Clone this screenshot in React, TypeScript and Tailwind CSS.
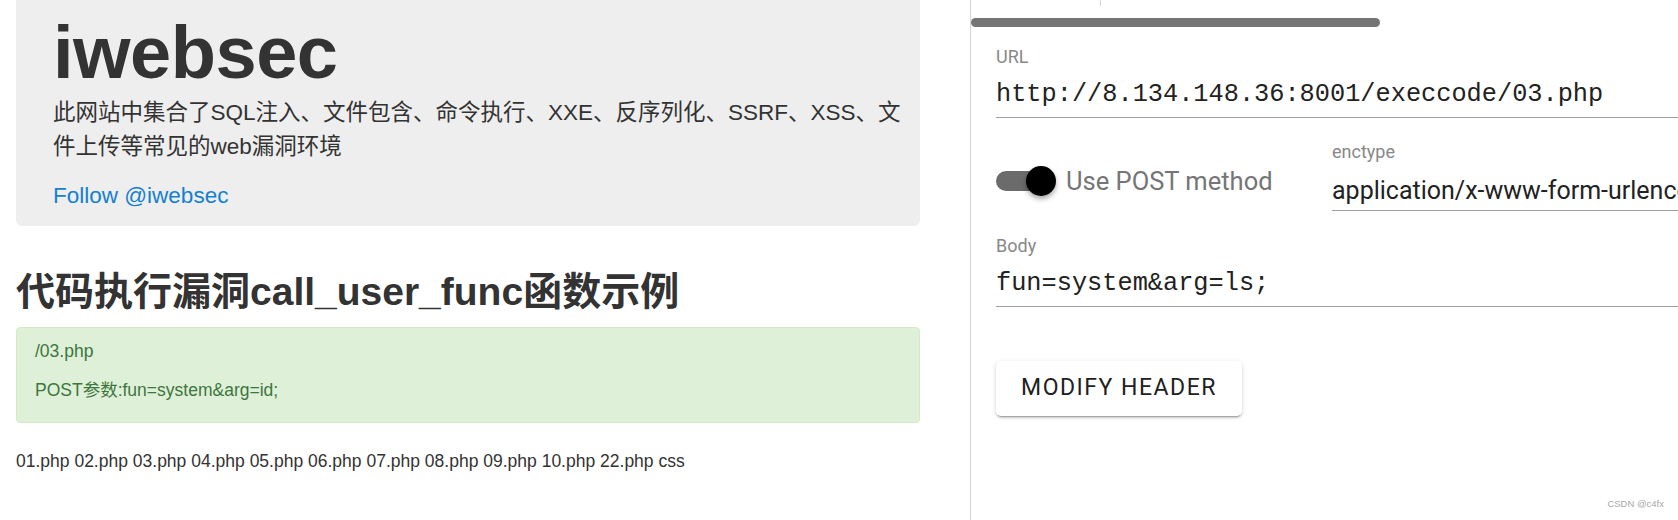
import React from 'react';

const pages = ['01.php', '02.php', '03.php', '04.php', '05.php', '06.php', '07.php', '08.php', '09.php', '10.php', '22.php', 'css'];

/* Left: the iwebsec demo page */
function DemoPage() {
  return (
    <div className="w-[970px] shrink-0 pl-4 pr-[50px] font-['Liberation_Sans','Noto_Sans_CJK_SC',sans-serif] text-[#333]">
      {/* jumbotron */}
      <div className="h-[226px] rounded-b-[6px] bg-[#eeeeee] pt-4 pl-[37px] pr-[14px]">
        <h1 className="text-[74px] font-bold leading-none tracking-[-0.5px]">iwebsec</h1>
        <p className="mt-[6px] text-[22.5px] leading-[34px]">
          此网站中集合了SQL注入、文件包含、命令执行、XXE、反序列化、SSRF、XSS、文件上传等常见的web漏洞环境
        </p>
        <p className="mt-[15px] text-[22.5px] leading-[34px]">
          <a className="text-[#1580d0]">Follow @iwebsec</a>
        </p>
      </div>

      <h2 className="mt-[44px] text-[39px] font-bold leading-[43px]">代码执行漏洞call_user_func函数示例</h2>

      <div className="mt-[14px] rounded-[4px] border border-[#d6e9c6] bg-[#dff0d8] px-[18px] pt-[11px] pb-[19px] text-[17.5px] leading-[25px] text-[#3c763d]">
        <p>/03.php</p>
        <p className="mt-[14px]">POST参数:fun=system&amp;arg=id;</p>
      </div>

      <div className="mt-[26px] text-[17.5px] leading-[25px]">
        {pages.map((p, i) => (
          <React.Fragment key={p}>
            <a>{p}</a>
            {i < pages.length - 1 ? ' ' : ''}
          </React.Fragment>
        ))}
      </div>
    </div>
  );
}

/* Right: HackBar-style request panel */
function RequestPanel() {
  return (
    <div className="relative min-w-0 flex-1 overflow-hidden border-l border-[#d3d3d3] font-['Roboto',sans-serif]">
      <div className="ml-[129px] h-[6px] w-px bg-[#d3d3d3]" />
      <div className="mt-[12px] h-[9px] w-[409px] rounded-full bg-[#757575]" />

      <div className="pl-[25px]">
        {/* URL */}
        <div className="mt-[20px] w-[900px]">
          <div className="text-[18px] leading-[20px] text-[#888]">URL</div>
          <div className="mt-[12px] border-b border-[#9e9e9e] pb-[6px] font-['Liberation_Mono',monospace] text-[25.3px] leading-[32px] whitespace-nowrap text-[#222]">
            http://8.134.148.36:8001/execcode/03.php
          </div>
        </div>

        {/* POST switch + enctype */}
        <div className="mt-[24px] flex items-start">
          <div className="mt-[24px] flex h-[30px] w-[336px] shrink-0 items-center">
            <div className="relative h-[30px] w-[60px] shrink-0">
              <div className="absolute left-0 top-[5px] h-[20px] w-[52px] rounded-full bg-[#6b6b6b]" />
              <div className="absolute left-[30px] top-0 h-[30px] w-[30px] rounded-full bg-black shadow-[0_3px_5px_rgba(0,0,0,0.35)]" />
            </div>
            <span className="ml-[10px] text-[25.5px] leading-[30px] text-[#757575]">Use POST method</span>
          </div>
          <div className="w-[500px] shrink-0">
            <div className="text-[18px] leading-[20px] text-[#888]">enctype</div>
            <div className="mt-[14px] border-b border-[#9e9e9e] pb-[4px] text-[25px] leading-[30px] whitespace-nowrap text-[#222]">
              application/x-www-form-urlencoded
            </div>
          </div>
        </div>

        {/* Body */}
        <div className="mt-[25px] w-[900px]">
          <div className="text-[18px] leading-[20px] text-[#888]">Body</div>
          <div className="mt-[12px] border-b border-[#9e9e9e] pb-[6px] font-['Liberation_Mono',monospace] text-[25.3px] leading-[32px] whitespace-nowrap text-[#222]">
            fun=system&amp;arg=ls;
          </div>
        </div>

        <button className="mt-[54px] flex h-[55px] w-[246px] items-center justify-center rounded-[5px] bg-white text-[23px] font-normal tracking-[1.5px] text-[#212121] shadow-[0_3px_1px_-2px_rgba(0,0,0,0.2),0_2px_2px_0_rgba(0,0,0,0.14),0_1px_5px_0_rgba(0,0,0,0.12)]">
          MODIFY HEADER
        </button>
      </div>

      <span className="absolute bottom-[9px] right-[14px] font-['Liberation_Sans',sans-serif] text-[9.5px] text-[#a8a8a8]">
        CSDN @c4fx
      </span>
    </div>
  );
}

export default function App() {
  return (
    <div className="flex h-[520px] w-[1678px] overflow-hidden bg-white">
      <DemoPage />
      <RequestPanel />
    </div>
  );
}
